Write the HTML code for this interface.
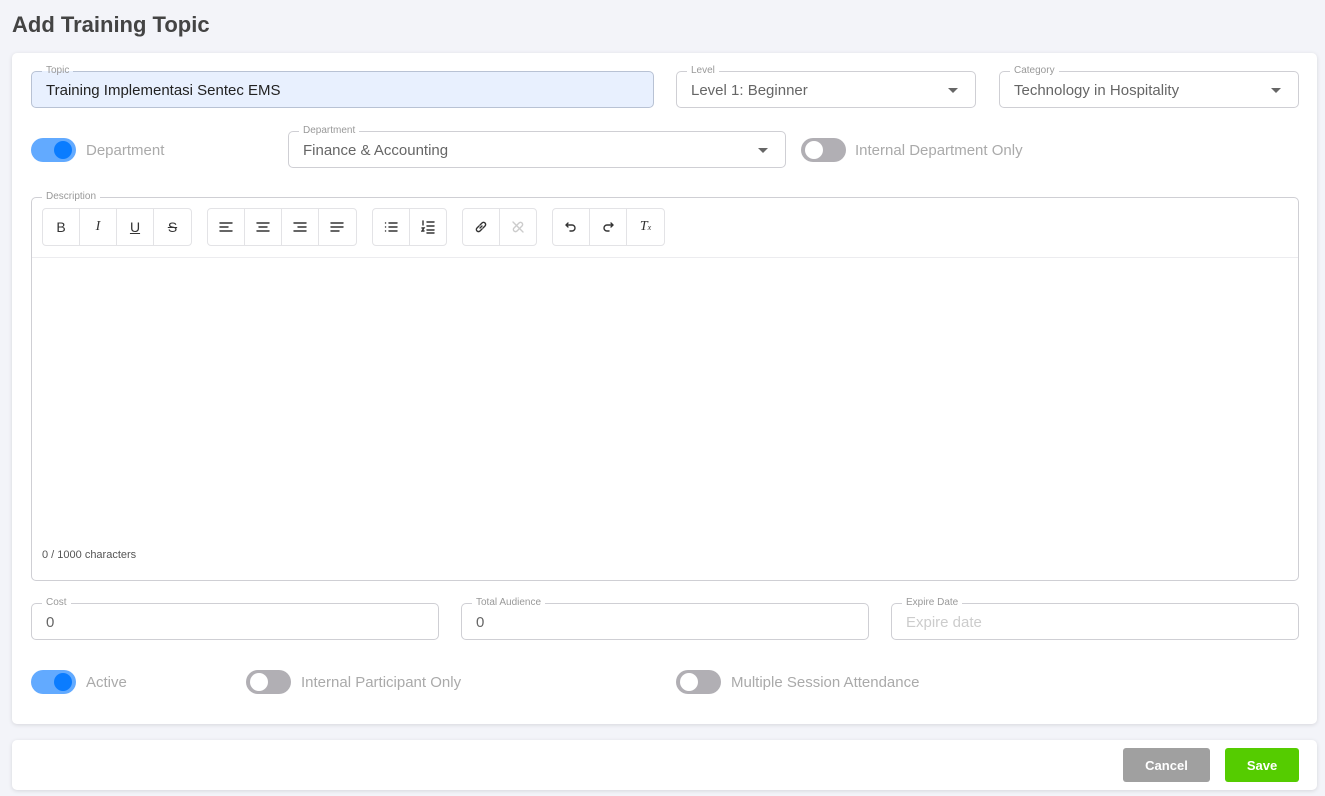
<!DOCTYPE html>
<html><head><style>
*{box-sizing:border-box;margin:0;padding:0}
body{width:1325px;height:796px;background:#f3f4f9;font-family:"Liberation Sans",sans-serif;position:relative;overflow:hidden;color:#333}
.a{position:absolute}
h1{position:absolute;left:12px;top:12px;font-size:22px;font-weight:bold;color:#444}
.card{background:#fff;border-radius:5px;box-shadow:0 1px 4px rgba(0,0,0,.12)}
.f{position:absolute;border:1px solid #cfcfd4;border-radius:5px;height:37px}
.f .l{position:absolute;top:-7px;left:10px;background:#fff;padding:0 4px;font-size:10px;color:#999;line-height:12px}
.f .v{position:absolute;left:14px;top:10px;font-size:15px;color:#666}
.f .c{position:absolute;right:17px;top:16px;border-left:5px solid transparent;border-right:5px solid transparent;border-top:5px solid #666}
.t{position:absolute;width:45px;height:24px;border-radius:12px;background:#b1afb4}
.t::after{content:"";position:absolute;left:4px;top:3px;width:18px;height:18px;border-radius:50%;background:#fff}
.t.on{background:#62aaff}.t.on::after{left:23px;background:#0a7cff}
.tl{position:absolute;font-size:15px;color:#aaa}
.g{position:absolute;top:208px;height:38px;border:1px solid #e3e3e6;border-radius:4px;display:flex}
.g div{width:37.5px;border-right:1px solid #e3e3e6;display:flex;align-items:center;justify-content:center;font-size:14px;color:#333}
.g div:last-child{border-right:none}
.g svg{width:14px;height:14px;fill:none;stroke:#333;stroke-width:1.4;stroke-linecap:round}
.btn{position:absolute;top:748px;height:34px;border-radius:3px;color:#fff;font-size:13px;font-weight:bold;display:flex;align-items:center;justify-content:center}
</style></head><body>
<h1>Add Training Topic</h1>
<div class="a card" style="left:12px;top:53px;width:1305px;height:671px"></div>
<div class="a card" style="left:12px;top:740px;width:1305px;height:50px"></div>

<div class="f" style="left:31px;top:71px;width:623px;background:#e8f0fe;border-color:#b8c2d4"><span class="l" style="background:linear-gradient(#fff 50%,#e8f0fe 50%)">Topic</span><span class="v" style="color:#222">Training Implementasi Sentec EMS</span></div>
<div class="f" style="left:676px;top:71px;width:300px"><span class="l">Level</span><span class="v">Level 1: Beginner</span><span class="c"></span></div>
<div class="f" style="left:999px;top:71px;width:300px"><span class="l">Category</span><span class="v">Technology in Hospitality</span><span class="c"></span></div>

<div class="t on" style="left:31px;top:138px"></div><span class="tl" style="left:86px;top:142px">Department</span>
<div class="f" style="left:288px;top:131px;width:498px"><span class="l">Department</span><span class="v">Finance &amp; Accounting</span><span class="c"></span></div>
<div class="t" style="left:801px;top:138px"></div><span class="tl" style="left:855px;top:142px">Internal Department Only</span>

<div class="f" style="left:31px;top:197px;width:1268px;height:384px"><span class="l">Description</span>
<div class="a" style="left:0;right:0;top:59px;border-top:1px solid #ececef"></div>
<span class="a" style="left:10px;top:351px;font-size:11px;color:#555">0 / 1000 characters</span></div>
<div class="g" style="left:42px;width:150px"><div>B</div><div style="font-style:italic;font-family:'Liberation Serif'">I</div><div style="text-decoration:underline">U</div><div style="text-decoration:line-through">S</div></div>
<div class="g" style="left:207px;width:150px">
<div><svg viewBox="0 0 14 14"><path d="M1 3h12M1 7h8M1 11h12"/></svg></div>
<div><svg viewBox="0 0 14 14"><path d="M1 3h12M3 7h8M1 11h12"/></svg></div>
<div><svg viewBox="0 0 14 14"><path d="M1 3h12M5 7h8M1 11h12"/></svg></div>
<div><svg viewBox="0 0 14 14"><path d="M1 3h12M1 7h12M1 11h8"/></svg></div></div>
<div class="g" style="left:372px;width:75px">
<div><svg viewBox="0 0 14 14"><path d="M5 3h8M5 7h8M5 11h8M1.5 3h.1M1.5 7h.1M1.5 11h.1"/></svg></div>
<div><svg viewBox="0 0 14 14"><path d="M6 2h7M6 6h7M6 10h7M6 13h7M2 1v4M1 8h2l-2 3h2"/></svg></div></div>
<div class="g" style="left:462px;width:75px">
<div><svg viewBox="0 0 14 14"><path d="M6 8l2-2M5 6L3 8a2 2 0 0 0 3 3l2-2M9 8l2-2a2 2 0 0 0-3-3L6 5"/></svg></div>
<div><svg viewBox="0 0 14 14" style="stroke:#ccc"><path d="M5 6L3 8a2 2 0 0 0 3 3l2-2M9 8l2-2a2 2 0 0 0-3-3L6 5M2 2l10 10"/></svg></div></div>
<div class="g" style="left:552px;width:113px">
<div><svg viewBox="0 0 14 14"><path d="M4 3L2 5l2 2M2 5h6a3 3 0 0 1 0 6H6"/></svg></div>
<div><svg viewBox="0 0 14 14"><path d="M10 3l2 2-2 2M12 5H6a3 3 0 0 0 0 6h2"/></svg></div>
<div style="font-style:italic;font-family:'Liberation Serif'">T<sub style="font-size:8px">x</sub></div></div>

<div class="f" style="left:31px;top:603px;width:408px"><span class="l">Cost</span><span class="v">0</span></div>
<div class="f" style="left:461px;top:603px;width:408px"><span class="l">Total Audience</span><span class="v">0</span></div>
<div class="f" style="left:891px;top:603px;width:408px"><span class="l">Expire Date</span><span class="v" style="color:#ccc">Expire date</span></div>

<div class="t on" style="left:31px;top:670px"></div><span class="tl" style="left:86px;top:674px">Active</span>
<div class="t" style="left:246px;top:670px"></div><span class="tl" style="left:301px;top:674px">Internal Participant Only</span>
<div class="t" style="left:676px;top:670px"></div><span class="tl" style="left:731px;top:674px">Multiple Session Attendance</span>

<div class="btn" style="left:1123px;width:87px;background:#a0a0a0">Cancel</div>
<div class="btn" style="left:1225px;width:74px;background:#55cc00">Save</div>
</body></html>
